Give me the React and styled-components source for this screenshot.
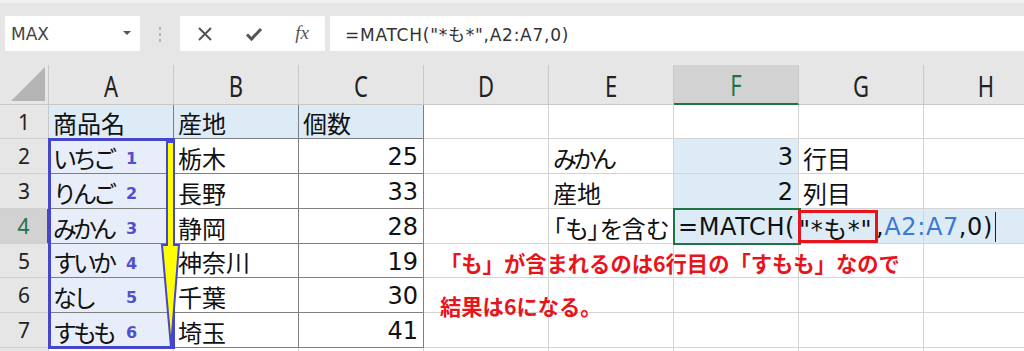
import React from "react"
import styled, { createGlobalStyle } from "styled-components"

const GRID_LIGHT = "#d4d4d4"
const GRID_DARK = "#7f7f7f"
const HEAD_BG = "#e6e6e6"
const HEAD_ACTIVE = "#d2d2d2"
const GREEN = "#217346"
const LIGHT_BLUE = "#ddebf7"
const LIST_BLUE = "#e7eef9"
const MARK_BLUE = "#4646cc"
const RED = "#e8141c"
const FONT = `"DejaVu Sans", "Noto Sans CJK JP", sans-serif`

const COLS = ["A", "B", "C", "D", "E", "F", "G", "H"]
const ROW_HEIGHTS = [34, 35, 35, 35, 34, 35, 35, 20]

const FRUITS = [
  { name: "いちご", n: 1, area: "栃木", count: 25 },
  { name: "りんご", n: 2, area: "長野", count: 33 },
  { name: "みかん", n: 3, area: "静岡", count: 28 },
  { name: "すいか", n: 4, area: "神奈川", count: 19 },
  { name: "なし", n: 5, area: "千葉", count: 30 },
  { name: "すもも", n: 6, area: "埼玉", count: 41 },
]

const GlobalStyle = createGlobalStyle`
  html, body {
    margin: 0;
    padding: 0;
    background: #ffffff;
  }
  body {
    font-family: ${FONT};
    overflow: hidden;
  }
`

const cellFor = (row, col) => {
  // row: 1..8, col: 0..7
  const inTable = row <= 7 && col <= 2
  const base = { dark: inTable, bg: null, align: "left", content: null }
  if (row === 1) {
    if (col === 0) return { ...base, bg: LIGHT_BLUE, content: "商品名" }
    if (col === 1) return { ...base, bg: LIGHT_BLUE, content: "産地" }
    if (col === 2) return { ...base, bg: LIGHT_BLUE, content: "個数" }
  }
  const fruit = FRUITS[row - 2]
  if (fruit) {
    if (col === 0)
      return {
        ...base,
        bg: LIST_BLUE,
        content: (
          <>
            <FruitName>{fruit.name}</FruitName>
            <Order>{fruit.n}</Order>
          </>
        ),
      }
    if (col === 1) return { ...base, content: fruit.area }
    if (col === 2) return { ...base, align: "right", content: fruit.count }
  }
  if (row === 2) {
    if (col === 4) return { ...base, content: <Kana>みかん</Kana> }
    if (col === 5) return { ...base, bg: LIGHT_BLUE, align: "right", content: 3 }
    if (col === 6) return { ...base, content: "行目" }
  }
  if (row === 3) {
    if (col === 4) return { ...base, content: "産地" }
    if (col === 5) return { ...base, bg: LIGHT_BLUE, align: "right", content: 2 }
    if (col === 6) return { ...base, content: "列目" }
  }
  if (row === 4) {
    if (col === 4) return { ...base, content: <Palt>「も」を含む</Palt> }
    if (col === 5)
      return {
        ...base,
        bg: LIGHT_BLUE,
        editing: true,
        content: (
          <Formula>
            =MATCH(<Pattern>"*も*"</Pattern>,<RefText>A2:A7</RefText>,0)
            <Caret />
          </Formula>
        ),
      }
    if (col >= 6) return { ...base, bg: LIGHT_BLUE }
  }
  return base
}

const App = () => {
  return (
    <Page>
      <GlobalStyle />
      <Toolbar>
        <NameBox>
          MAX
          <DropCaret />
        </NameBox>
        <Grip>
          <span />
          <span />
          <span />
        </Grip>
        <FormulaButtons>
          <svg width="16" height="16" viewBox="0 0 16 16">
            <path d="M2 2 L14 14 M14 2 L2 14" stroke="#555" strokeWidth="2" fill="none" />
          </svg>
          <svg width="18" height="16" viewBox="0 0 18 16">
            <path d="M2 8.5 L6.5 13 L16 3" stroke="#555" strokeWidth="3" fill="none" />
          </svg>
          <Fx>fx</Fx>
        </FormulaButtons>
        <FormulaInput>=MATCH("*も*",A2:A7,0)</FormulaInput>
      </Toolbar>

      <Sheet>
        <Corner>
          <svg width="36" height="36" viewBox="0 0 36 36">
            <polygon points="35,1 35,35 1,35" fill="#b4b4b4" />
          </svg>
        </Corner>
        {COLS.map(c => (
          <ColHeader key={c} $active={c === "F"}>
            <HeaderLetter>{c}</HeaderLetter>
          </ColHeader>
        ))}
        {ROW_HEIGHTS.map((h, ri) => {
          const row = ri + 1
          return (
            <React.Fragment key={row}>
              <RowHeader $active={row === 4}>{row <= 7 ? row : ""}</RowHeader>
              {COLS.map((c, ci) => {
                const cell = cellFor(row, ci)
                return (
                  <Cell
                    key={c}
                    $bg={cell.bg}
                    $dark={cell.dark}
                    $align={cell.align}
                    $editing={cell.editing}
                  >
                    {cell.content}
                  </Cell>
                )
              })}
            </React.Fragment>
          )
        })}
      </Sheet>

      <ListFrame />
      <Arrow width="26" height="212" viewBox="0 0 26 212">
        <polygon
          points="8,4 15,4 15,107 20,107 12,209 3,107 8,107"
          fill="#ffff00"
          stroke={MARK_BLUE}
          strokeWidth="2"
          strokeLinejoin="miter"
        />
      </Arrow>
      <ActiveCell />
      <PatternBox />
      <Note>
        <NoteLine>「も」が含まれるのは6行目の「すもも」なので</NoteLine>
        <NoteLine>結果は6になる。</NoteLine>
      </Note>
    </Page>
  )
}

export default App

const Page = styled.div`
  position: relative;
  width: 1024px;
  height: 351px;
  overflow: hidden;
  background: #ffffff;
`

const Toolbar = styled.div`
  display: flex;
  align-items: flex-start;
  height: 65px;
  box-sizing: border-box;
  padding: 13px 0 0 5px;
  background: ${HEAD_BG};
  border-top: 3px solid #f1f1f1;
`

const NameBox = styled.div`
  position: relative;
  display: flex;
  align-items: center;
  width: 135px;
  height: 35px;
  box-sizing: border-box;
  padding-left: 6px;
  background: #ffffff;
  font-size: 17px;
  color: #444444;
`

const DropCaret = styled.span`
  position: absolute;
  right: 9px;
  top: 15px;
  width: 0;
  height: 0;
  border-left: 4px solid transparent;
  border-right: 4px solid transparent;
  border-top: 4px solid #555555;
`

const Grip = styled.div`
  display: flex;
  flex-direction: column;
  gap: 3px;
  width: 40px;
  align-items: center;
  padding-top: 11px;

  span {
    width: 2px;
    height: 3px;
    background: #b4b4b4;
  }
`

const FormulaButtons = styled.div`
  display: flex;
  align-items: center;
  justify-content: space-between;
  width: 145px;
  height: 35px;
  box-sizing: border-box;
  padding: 0 16px 0 17px;
  background: #ffffff;
`

const Fx = styled.span`
  font-family: "Liberation Serif", serif;
  font-style: italic;
  font-size: 19px;
  color: #555555;
  margin-top: -2px;
`

const FormulaInput = styled.div`
  flex: 1;
  display: flex;
  align-items: center;
  height: 35px;
  margin-left: 5px;
  padding-left: 15px;
  background: #ffffff;
  font-size: 17px;
  letter-spacing: 0.75px;
  color: #333333;
  white-space: nowrap;
`

const Sheet = styled.div`
  display: grid;
  grid-template-columns: 49px repeat(8, 125px);
  grid-template-rows: 40px ${ROW_HEIGHTS.map(h => `${h}px`).join(" ")};
`

const Corner = styled.div`
  display: flex;
  align-items: flex-end;
  justify-content: flex-end;
  padding: 0 2px 2px 0;
  box-sizing: border-box;
  background: ${HEAD_BG};
  border-right: 1px solid #c8c8c8;
  border-bottom: 1px solid #c8c8c8;
`

const ColHeader = styled.div`
  display: flex;
  align-items: center;
  justify-content: center;
  box-sizing: border-box;
  background: ${p => (p.$active ? HEAD_ACTIVE : HEAD_BG)};
  border-right: 1px solid #c8c8c8;
  border-bottom: ${p => (p.$active ? `2px solid ${GREEN}` : "1px solid #c8c8c8")};
  color: ${p => (p.$active ? GREEN : "#222222")};
`

const HeaderLetter = styled.span`
  font-family: "Noto Sans", sans-serif;
  font-size: 22px;
  transform: scaleY(1.3);
`

const RowHeader = styled.div`
  display: flex;
  align-items: center;
  justify-content: center;
  box-sizing: border-box;
  background: ${p => (p.$active ? HEAD_ACTIVE : HEAD_BG)};
  border-right: ${p => (p.$active ? `2px solid ${GREEN}` : "1px solid #c8c8c8")};
  border-bottom: 1px solid #d0d0d0;
  font-family: "Noto Sans", sans-serif;
  font-size: 21px;
  color: ${p => (p.$active ? GREEN : "#222222")};
`

const Cell = styled.div`
  position: ${p => (p.$editing ? "relative" : "static")};
  z-index: ${p => (p.$editing ? 1 : "auto")};
  display: flex;
  align-items: center;
  justify-content: ${p => (p.$align === "right" ? "flex-end" : "flex-start")};
  box-sizing: border-box;
  padding: 2px 5px 0 4px;
  background: ${p => p.$bg || "#ffffff"};
  border-right: 1px solid ${p => (p.$dark ? GRID_DARK : GRID_LIGHT)};
  border-bottom: 1px solid ${p => (p.$dark ? GRID_DARK : GRID_LIGHT)};
  font-size: 24px;
  color: #111111;
  white-space: nowrap;
  overflow: ${p => (p.$editing ? "visible" : "hidden")};
`

const Kana = styled.span`
  letter-spacing: -4px;
`

const FruitName = styled(Kana)`
  width: 73px;
`

const Order = styled.span`
  font-weight: 700;
  font-size: 16px;
  color: #5050cc;
  margin-top: 3px;
`

const Palt = styled.span`
  font-feature-settings: "palt";
`

const Formula = styled.span`
  display: flex;
  align-items: center;
  letter-spacing: 0.6px;
`

const Pattern = styled.span`
  padding: 0 4px 0 4px;
`

const RefText = styled.span`
  color: #3a78d6;
`

const Caret = styled.span`
  display: inline-block;
  width: 1px;
  height: 30px;
  margin-left: 2px;
  background: #222222;
`

const ListFrame = styled.div`
  position: absolute;
  left: 48px;
  top: 138px;
  width: 127px;
  height: 211px;
  box-sizing: border-box;
  border: 3px solid ${MARK_BLUE};
  pointer-events: none;
`

const Arrow = styled.svg`
  position: absolute;
  left: 159px;
  top: 138px;
`

const ActiveCell = styled.div`
  position: absolute;
  left: 673px;
  top: 208px;
  width: 128px;
  height: 37px;
  box-sizing: border-box;
  border: 2px solid ${GREEN};
  z-index: 2;
`

const PatternBox = styled.div`
  position: absolute;
  left: 798px;
  top: 210px;
  width: 80px;
  height: 33px;
  box-sizing: border-box;
  border: 3px solid ${RED};
  z-index: 3;
`

const Note = styled.div`
  position: absolute;
  left: 440px;
  top: 241px;
  z-index: 2;
`

const NoteLine = styled.div`
  height: 43px;
  line-height: 43px;
  font-family: "Noto Sans CJK JP", sans-serif;
  font-size: 21.3px;
  font-weight: 700;
  color: ${RED};
  white-space: nowrap;
`
